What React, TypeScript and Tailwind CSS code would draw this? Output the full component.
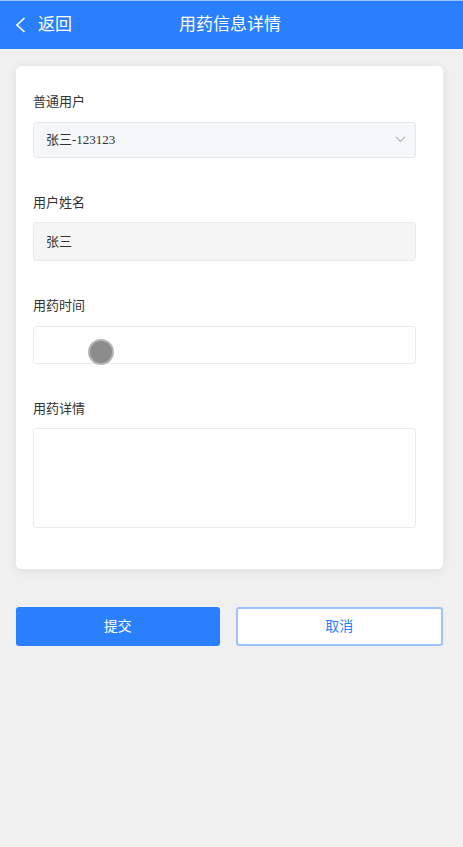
import React from 'react';

const font = { fontFamily: '"Liberation Sans", "Noto Sans CJK SC", sans-serif' };

const App: React.FC = () => {
  return (
    <div className="min-h-[847px] bg-[#f0f0f0]" style={font}>
      {/* header */}
      <div className="relative flex h-[49px] items-center border-t border-[#9cc2ff] bg-[#2a7fff] text-white">
        <div className="flex items-center pl-[15px]">
          <svg width="11" height="16" viewBox="0 0 11 16" fill="none">
            <path d="M9.5 1L2 8l7.5 7" stroke="white" strokeWidth="1.7" />
          </svg>
          <span className="ml-[12px] text-[17px]">返回</span>
        </div>
        <div className="absolute left-0 right-0 text-center text-[17px]">
          <span className="mr-[3px]">用药信息详情</span>
        </div>
      </div>

      {/* form card */}
      <div className="ml-[16px] mr-[20px] mt-[17px] rounded-[5px] bg-white pl-[17px] pr-[27px] pt-[26px] pb-[41px] shadow-[0_2px_10px_rgba(0,0,0,0.08)]">
        <div className="text-[13px] text-[#333]">普通用户</div>
        <div className="mt-[10px] flex h-[36px] items-center justify-between rounded-[3px] border border-[#e6e8ec] bg-[#f5f7fa] pl-[12px] pr-[9px]">
          <span className="text-[13px] text-[#333]" style={{ fontFamily: '"Liberation Serif", "Noto Sans CJK SC", serif' }}>
            <span style={font}>张三</span>-123123
          </span>
          <svg width="11" height="7" viewBox="0 0 11 7" fill="none">
            <path d="M1 1l4.5 4.5L10 1" stroke="#b0b3b8" strokeWidth="1.1" />
          </svg>
        </div>

        <div className="mt-[35px] text-[13px] text-[#333]">用户姓名</div>
        <div className="mt-[10px] flex h-[39px] items-center rounded-[3px] border border-[#ebebeb] bg-[#f5f5f5] pl-[12px]">
          <span className="text-[13px] text-[#333]">张三</span>
        </div>

        <div className="mt-[35px] text-[13px] text-[#333]">用药时间</div>
        <div className="relative mt-[10px] h-[38px] rounded-[3px] border border-[#ebebeb] bg-white">
          <div className="absolute left-[54px] top-[12px] h-[26px] w-[26px] rounded-full border-2 border-[#b5b5b5] bg-[#8c8c8c]" />
        </div>

        <div className="mt-[35px] text-[13px] text-[#333]">用药详情</div>
        <div className="mt-[10px] h-[100px] rounded-[3px] border border-[#ebebeb] bg-white" />
      </div>

      {/* buttons */}
      <div className="ml-[16px] mr-[20px] mt-[38px] flex gap-[16px]">
        <button className="h-[39px] flex-1 rounded-[3px] bg-[#2a7fff] text-[14px] text-white">提交</button>
        <button className="h-[39px] flex-1 rounded-[3px] border-2 border-[#9cc2ff] bg-white text-[14px] text-[#2a7fff]">取消</button>
      </div>
    </div>
  );
};

export default App;
